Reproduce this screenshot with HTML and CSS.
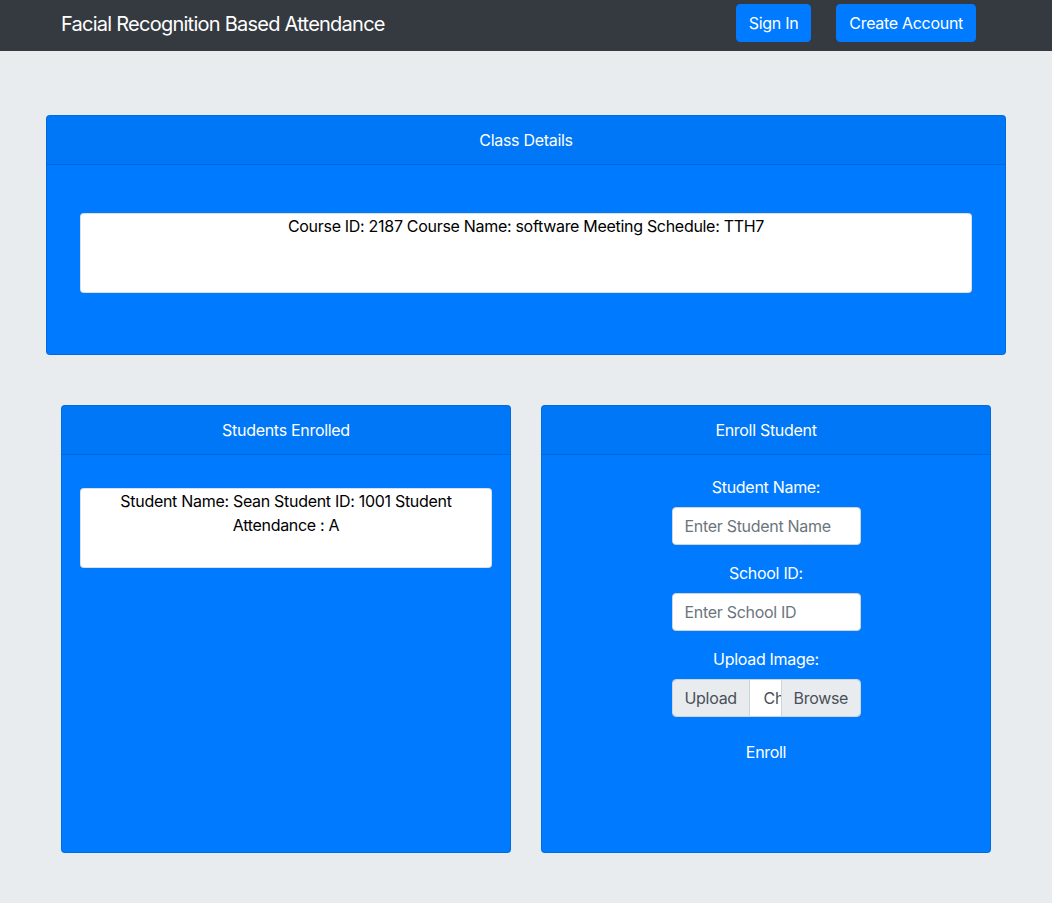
FILE: index.html
```html
<!DOCTYPE html>
<html lang="en">
<head>
<meta charset="utf-8">
<title>Facial Recognition Based Attendance</title>
<link rel="stylesheet" href="styles.css">
</head>
<body>
<nav class="navbar">
  <div class="nav-inner">
    <span class="brand">Facial Recognition Based Attendance</span>
    <div class="nav-actions">
      <button class="btn btn-primary">Sign In</button>
      <button class="btn btn-primary">Create Account</button>
    </div>
  </div>
</nav>
<main class="page">
  <section class="card card-wide">
    <div class="card-header">Class Details</div>
    <div class="card-body body-class">
      <div class="info-box">Course ID: 2187 Course Name: software Meeting Schedule: TTH7</div>
    </div>
  </section>
  <div class="row">
    <section class="card card-tall">
      <div class="card-header">Students Enrolled</div>
      <div class="card-body body-list">
        <div class="info-box">Student Name: Sean Student ID: 1001 Student Attendance : A</div>
      </div>
    </section>
    <section class="card card-tall">
      <div class="card-header">Enroll Student</div>
      <form class="card-body body-form">
        <div class="form-group">
          <label class="label">Student Name:</label>
          <input class="input" type="text" placeholder="Enter Student Name">
        </div>
        <div class="form-group">
          <label class="label">School ID:</label>
          <input class="input" type="text" placeholder="Enter School ID">
        </div>
        <div class="form-group">
          <label class="label">Upload Image:</label>
          <div class="input-group">
            <span class="ig-text">Upload</span>
            <span class="ig-file"><span class="ig-file-text">Choose file</span></span>
            <span class="ig-text ig-browse">Browse</span>
          </div>
        </div>
        <button type="button" class="btn btn-primary btn-enroll">Enroll</button>
      </form>
    </section>
  </div>
</main>
</body>
</html>
```
FILE: styles.css
```css
* { box-sizing: border-box; }
html, body { margin: 0; padding: 0; }
body {
  font-family: "Inter", "Noto Sans", sans-serif;
  font-size: 16px;
  line-height: 24px;
  color: #212529;
  background: #e9ecef;
  min-height: 903px;
}
.navbar {
  background: #343a40;
  height: 51px;
}
.nav-inner {
  width: 960px;
  margin: 0 auto;
  padding: 4px 30px 9px 15px;
  display: flex;
  align-items: center;
  justify-content: space-between;
  height: 51px;
}
.brand {
  color: #fff;
  font-size: 20px;
  line-height: 30px;
  letter-spacing: -0.75px;
  padding-top: 2px;
}
.nav-actions { display: flex; gap: 25px; }
.btn {
  font-family: inherit;
  font-size: 16px;
  line-height: 24px;
  padding: 6px 12px;
  border: 1px solid transparent;
  border-radius: 4px;
  cursor: pointer;
  letter-spacing: -0.3px;
}
.btn-primary {
  background: #007bff;
  border-color: #007bff;
  color: #fff;
}
.page {
  padding-top: 64px;
}
.card {
  background: #007bff;
  border: 1px solid rgba(0,0,0,.125);
  border-radius: 4px;
  color: #fff;
  display: flex;
  flex-direction: column;
}
.card-wide {
  width: 960px;
  margin: 0 auto;
}
.card-header {
  background: rgba(0,0,0,.03);
  border-bottom: 1px solid rgba(0,0,0,.125);
  padding: 12px 20px;
  text-align: center;
  line-height: 24px;
  letter-spacing: -0.3px;
}
.body-class { padding: 48px 33px 61px; }
.info-box {
  background: #fff;
  color: #000;
  border: 1px solid rgba(0,0,0,.125);
  border-radius: 4px;
  height: 80px;
  text-align: center;
  padding: 0 30px;
  letter-spacing: -0.3px;
}
.row {
  width: 930px;
  margin: 50px auto 0;
  display: grid;
  grid-template-columns: 450px 450px;
  gap: 30px;
}
.card-tall { height: 448px; }
.body-list { padding: 33px 18px; }
.body-form {
  padding: 20px 20px;
  display: flex;
  flex-direction: column;
  align-items: center;
  margin: 0;
}
.form-group {
  display: flex;
  flex-direction: column;
  align-items: center;
  margin-bottom: 16px;
}
.label {
  margin-bottom: 8px;
  letter-spacing: -0.3px;
}
.input {
  width: 189px;
  height: 38px;
  font-family: inherit;
  font-size: 16px;
  padding: 6px 12px;
  border: 1px solid #ced4da;
  border-radius: 4px;
  color: #495057;
  background: #fff;
  letter-spacing: -0.3px;
}
.input::placeholder { color: #6c757d; }
.input-group {
  width: 189px;
  height: 38px;
  display: flex;
  border: 1px solid #ced4da;
  border-radius: 4px;
  overflow: hidden;
}
.ig-text {
  background: #e9ecef;
  color: #495057;
  padding: 6px 12px;
  line-height: 24px;
  white-space: nowrap;
  letter-spacing: -0.3px;
}
.ig-text:first-child {
  width: 77px;
  flex: none;
  border-right: 1px solid #ced4da;
}
.ig-file {
  flex: 1;
  min-width: 0;
  overflow: hidden;
  white-space: nowrap;
  color: #495057;
  background: #fff;
  padding: 6px 0 6px 14px;
  line-height: 24px;
  letter-spacing: -0.3px;
}
.ig-browse {
  width: 79px;
  flex: none;
  border-left: 1px solid #ced4da;
}
.btn-enroll {
  margin-top: 0;
  background: transparent;
  border-color: transparent;
}
```
